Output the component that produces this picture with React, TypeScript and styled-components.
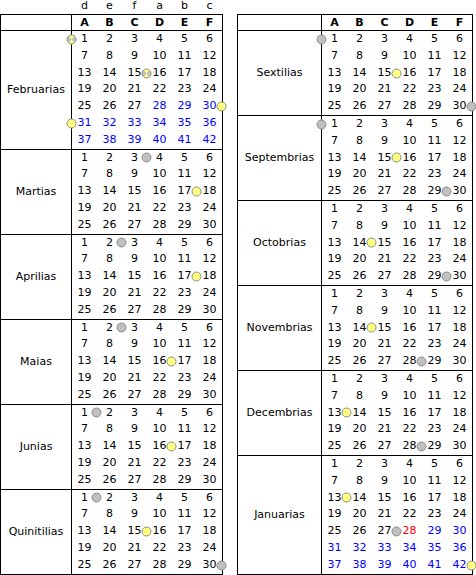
import styled, { createGlobalStyle } from "styled-components";

type Kind = "gray" | "yellow" | "both";
type Mark = [number, number, Kind];

interface MonthData {
  name: string;
  rows: number;
  blue?: number;
  red?: number[];
  marks: Mark[];
}

const LEFT: MonthData[] = [
  {
    name: "Februarias",
    rows: 7,
    blue: 28,
    marks: [
      [0, 0, "both"],
      [2, 3, "both"],
      [4, 6, "yellow"],
      [5, 0, "yellow"],
    ],
  },
  { name: "Martias", rows: 5, marks: [[0, 3, "gray"], [2, 5, "yellow"]] },
  { name: "Aprilias", rows: 5, marks: [[0, 2, "gray"], [2, 5, "yellow"]] },
  { name: "Maias", rows: 5, marks: [[0, 2, "gray"], [2, 4, "yellow"]] },
  { name: "Junias", rows: 5, marks: [[0, 1, "gray"], [2, 4, "yellow"]] },
  {
    name: "Quinitilias",
    rows: 5,
    marks: [[0, 1, "gray"], [2, 3, "yellow"], [4, 6, "gray"]],
  },
];

const RIGHT: MonthData[] = [
  {
    name: "Sextilias",
    rows: 5,
    marks: [[0, 0, "gray"], [2, 3, "yellow"], [4, 6, "gray"]],
  },
  {
    name: "Septembrias",
    rows: 5,
    marks: [[0, 0, "gray"], [2, 3, "yellow"], [4, 5, "gray"]],
  },
  { name: "Octobrias", rows: 5, marks: [[2, 2, "yellow"], [4, 5, "gray"]] },
  { name: "Novembrias", rows: 5, marks: [[2, 2, "yellow"], [4, 4, "gray"]] },
  { name: "Decembrias", rows: 5, marks: [[2, 1, "yellow"], [4, 4, "gray"]] },
  {
    name: "Januarias",
    rows: 7,
    blue: 29,
    red: [28],
    marks: [[2, 1, "yellow"], [4, 3, "gray"], [6, 6, "yellow"]],
  },
];

const COLS = ["A", "B", "C", "D", "E", "F"];
const ROW_H = 16.8;
const COL_W = 25;

const GlobalStyle = createGlobalStyle`
  body {
    margin: 0;
    background: #ffffff;
    font-family: "DejaVu Sans", "Liberation Sans", sans-serif;
    font-size: 11px;
    color: #000000;
  }
`;

const Page = styled.div`
  display: flex;
  gap: 14px;
  align-items: flex-start;
`;

const Panel = styled.div`
  display: flex;
  flex-direction: column;
`;

const LetterRow = styled.div<{ $month: number }>`
  display: grid;
  grid-template-columns: ${(p) => p.$month + 2}px repeat(6, ${COL_W}px);
  height: 14px;
  line-height: 12px;
  text-align: center;
`;

const Table = styled.div`
  border: 1px solid #000000;
`;

const HeaderRow = styled.div<{ $month: number }>`
  display: grid;
  grid-template-columns: ${(p) => p.$month + 1}px repeat(6, ${COL_W}px);
  height: 15px;
  line-height: 15px;
  border-bottom: 1px solid #000000;
  font-weight: bold;
  text-align: center;
`;

const Corner = styled.div`
  border-right: 1px solid #000000;
`;

const Block = styled.div<{ $month: number }>`
  display: grid;
  grid-template-columns: ${(p) => p.$month + 1}px ${COL_W * 6}px;
  & + & {
    border-top: 1px solid #000000;
  }
`;

const MonthCell = styled.div`
  border-right: 1px solid #000000;
  display: flex;
  align-items: center;
  justify-content: center;
`;

const Weeks = styled.div`
  position: relative;
  display: grid;
  grid-template-columns: repeat(6, ${COL_W}px);
  grid-auto-rows: ${ROW_H}px;
  line-height: ${ROW_H}px;
`;

const Day = styled.span<{ $tone: string }>`
  text-align: center;
  color: ${(p) => p.$tone};
`;

const Marker = styled.svg<{ $row: number; $col: number }>`
  position: absolute;
  width: 11px;
  height: 11px;
  left: ${(p) => p.$col * COL_W - 6}px;
  top: ${(p) => p.$row * ROW_H + ROW_H / 2 - 5.5}px;
  overflow: visible;
`;

const Dot = ({ row, col, kind }: { row: number; col: number; kind: Kind }) => (
  <Marker $row={row} $col={col} viewBox="0 0 11 11">
    <circle
      cx="5.5"
      cy="5.5"
      r="4.5"
      fill={kind === "yellow" ? "#ffff80" : "#c0c0c0"}
    />
    {kind === "both" && (
      <path
        d="M5.5 5.5 L2.6 2.05 A4.5 4.5 0 0 1 8.4 2.05 Z M5.5 5.5 L8.4 8.95 A4.5 4.5 0 0 1 2.6 8.95 Z"
        fill="#ffff80"
      />
    )}
    <circle cx="5.5" cy="5.5" r="4.5" fill="none" stroke="#8c8c8c" />
  </Marker>
);

const toneOf = (m: MonthData, n: number) => {
  if (m.red && m.red.includes(n)) return "#ff0000";
  if (m.blue && n >= m.blue) return "#0000ff";
  return "#000000";
};

const Calendar = ({
  months,
  monthWidth,
  letters,
}: {
  months: MonthData[];
  monthWidth: number;
  letters?: string[];
}) => (
  <Panel>
    <LetterRow $month={monthWidth}>
      <span />
      {(letters ?? []).map((l) => (
        <span key={l}>{l}</span>
      ))}
    </LetterRow>
    <Table>
      <HeaderRow $month={monthWidth}>
        <Corner />
        {COLS.map((c) => (
          <span key={c}>{c}</span>
        ))}
      </HeaderRow>
      {months.map((m) => (
        <Block key={m.name} $month={monthWidth}>
          <MonthCell>{m.name}</MonthCell>
          <Weeks>
            {Array.from({ length: m.rows * 6 }, (_, i) => (
              <Day key={i} $tone={toneOf(m, i + 1)}>
                {i + 1}
              </Day>
            ))}
            {m.marks.map(([row, col, kind]) => (
              <Dot key={`${row}-${col}`} row={row} col={col} kind={kind} />
            ))}
          </Weeks>
        </Block>
      ))}
    </Table>
  </Panel>
);

export default function App() {
  return (
    <>
      <GlobalStyle />
      <Page>
        <Calendar
          months={LEFT}
          monthWidth={70}
          letters={["d", "e", "f", "a", "b", "c"]}
        />
        <Calendar months={RIGHT} monthWidth={83} />
      </Page>
    </>
  );
}
